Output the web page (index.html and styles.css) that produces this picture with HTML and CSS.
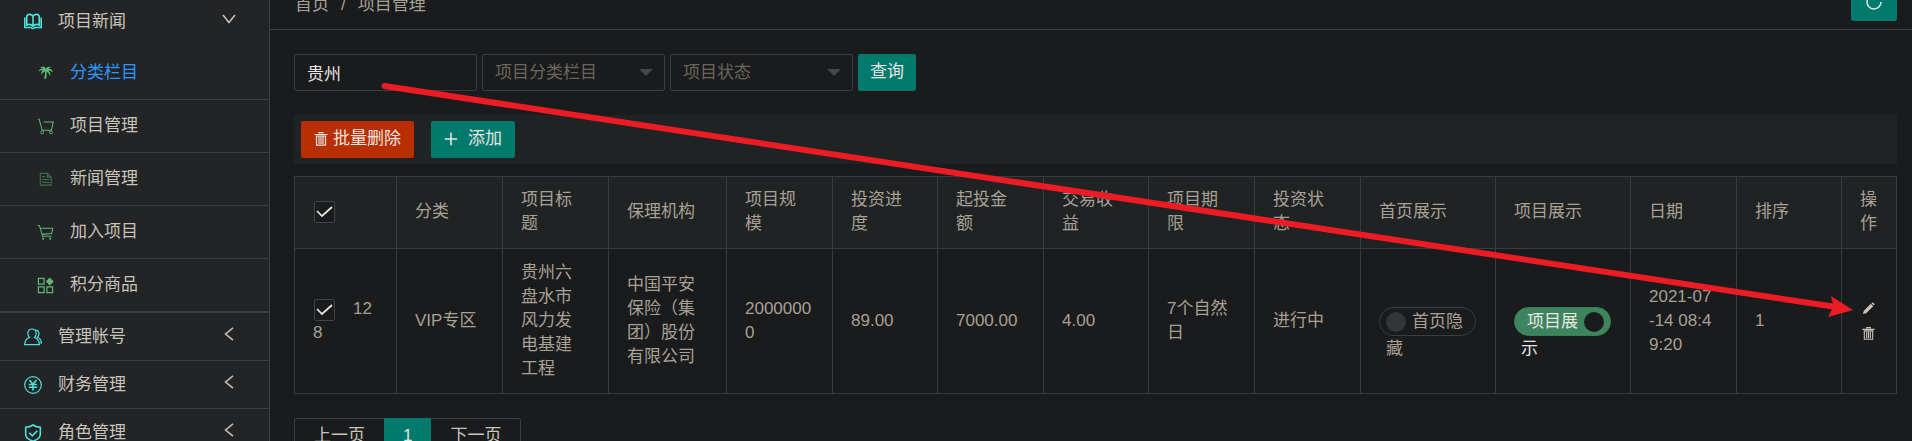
FILE: index.html
```html
<!DOCTYPE html>
<html lang="zh-CN">
<head>
<meta charset="utf-8">
<title>项目管理</title>
<link rel="stylesheet" href="styles.css">
</head>
<body>
<svg class="sprite" aria-hidden="true">
  <symbol id="i-down" viewBox="0 0 14 14"><path d="M1 3l6 7.500 6-7.500" fill="none" stroke="currentColor" stroke-width="1.500"/></symbol>
  <symbol id="i-left" viewBox="0 0 14 14"><path d="M11 .8L3.500 7l7.500 6.200" fill="none" stroke="currentColor" stroke-width="1.500"/></symbol>
  <symbol id="i-trash" viewBox="0 0 14 14"><path d="M5 1.500V.7h4v.8M.5 2.500h13M1.800 4.200h10.400M2.500 4.500v8.700h9V4.500M5 5v7M7 5v7M9 5v7" fill="none" stroke="currentColor" stroke-width="1.200"/></symbol>
  <symbol id="i-cart" viewBox="0 0 18 18"><path d="M.5 1.500h2l3.500 11.500h9.500M3.800 4.500h13L15.500 10l-10 1" fill="none" stroke="currentColor" stroke-width="1.100"/><circle cx="6.500" cy="15.500" r="1.100" fill="currentColor"/><circle cx="14" cy="15.500" r="1.100" fill="currentColor"/></symbol>
</svg>
<div class="layout">
  <nav class="sidebar" aria-label="主菜单">
    <ul class="menu">
      <li>
        <a class="menu-title menu-title-open" href="#">
          <svg class="menu-icon" viewBox="0 0 18 18"><path d="M9 3.500v9.500M9 3.500C8 .8 3.500.8 2.800 3V12c2-1 4.500-.8 6.200 1.300 1.700-2.100 4.200-2.300 6.200-1.300V3C14.500.8 10 .8 9 3.500zM.8 4.500v10H7c.5 1.300 3.500 1.300 4 0h6.200v-10" fill="none" stroke="currentColor" stroke-width="1.600"/></svg>
          <span>项目新闻</span>
          <svg class="menu-arrow"><use href="#i-down"/></svg>
        </a>
        <ul class="submenu">
          <li><a class="submenu-link submenu-link-active" href="#">
            <svg class="submenu-icon" viewBox="0 0 18 18"><path d="M9.300 5C8 2.300 5.200 2 3.500 4c1.500-.2 2.400 0 3.200.8C4.200 4.200 2 5.500 1.500 8.300c1.700-1.500 3-1.800 4.300-1.500C4.600 8 4.300 9.800 5 11.500 5.700 9.600 6.900 8.500 8.400 8c.3 2.500 0 5-1 7.500h2.200c.7-2.500.8-4.900.4-7.300 2 .8 3.300 2.500 3.800 4.800 1-2.200.2-4.400-1.600-5.700 1.800-.3 3.200.3 4.500 1.700.1-2.500-1.800-4-4.600-3.900.7-.9 1.700-1.300 3-1.300-1.800-1.600-4.500-1.100-5.800 1.200z" fill="currentColor"/></svg>
            <span>分类栏目</span></a></li>
          <li><a class="submenu-link" href="#">
            <svg class="submenu-icon" viewBox="0 0 18 18"><path d="M.8 1.300h1.500L5.500 13h9.800l1.900-8.800H7" fill="none" stroke="currentColor" stroke-width="1.100"/><circle cx="5.500" cy="15.300" r="1.500" fill="none" stroke="currentColor"/><circle cx="14.800" cy="15.300" r="1.500" fill="none" stroke="currentColor"/></svg>
            <span>项目管理</span></a></li>
          <li><a class="submenu-link" href="#">
            <svg class="submenu-icon submenu-icon-dim" viewBox="0 0 18 18"><path d="M3.500 2.500h7.500l4 4v8.500H3.500zM11 2.500v4h4M5.500 6h3M5.500 9h7.500M5.500 12h7.500" fill="none" stroke="currentColor" stroke-width="1.200"/></svg>
            <span>新闻管理</span></a></li>
          <li><a class="submenu-link" href="#">
            <svg class="submenu-icon"><use href="#i-cart"/></svg>
            <span>加入项目</span></a></li>
          <li><a class="submenu-link" href="#">
            <svg class="submenu-icon" viewBox="0 0 18 18"><path d="M1.500 1.500h6v6h-6zM1.500 10.500h6v6h-6zM10.500 10.500h6v6h-6z" fill="none" stroke="currentColor" stroke-width="1.300"/><path d="M13.500.5l4.200 4.200-4.200 4.200-4.200-4.200z" fill="currentColor"/></svg>
            <span>积分商品</span></a></li>
        </ul>
      </li>
      <li>
        <a class="menu-title" href="#">
          <svg class="menu-icon" viewBox="0 0 18 18"><path d="M5.500 9.500C3 7 3 1 8 1s5 6 2.500 8.500c3 1 4.800 3 5 7.200H.6c.2-4.200 1.900-6.200 4.900-7.200zM11.500 2c4.500.5 4 5 2 7.200 2.500 1 3.700 2.800 4 5.800h-2" fill="none" stroke="currentColor" stroke-width="1.200"/></svg>
          <span>管理帐号</span>
          <svg class="menu-arrow"><use href="#i-left"/></svg>
        </a>
      </li>
      <li>
        <a class="menu-title" href="#">
          <svg class="menu-icon" viewBox="0 0 18 18"><circle cx="9" cy="9" r="8.300" fill="none" stroke="currentColor" stroke-width="1.200"/><path d="M5.500 4L9 8.300 12.500 4M9 8v6.500M4.800 8.500h8.400M4.800 11.300h8.400" fill="none" stroke="currentColor" stroke-width="1.600"/></svg>
          <span>财务管理</span>
          <svg class="menu-arrow"><use href="#i-left"/></svg>
        </a>
      </li>
      <li>
        <a class="menu-title" href="#">
          <svg class="menu-icon" viewBox="0 0 18 18"><path d="M9 1c2 1.500 4.500 2.200 7.300 2.200v7.300c0 3-3.300 5.200-7.300 6.800-4-1.600-7.300-3.800-7.300-6.800V3.200C4.500 3.200 7 2.500 9 1zM5.300 8.800l3 3 5-5" fill="none" stroke="currentColor" stroke-width="1.600"/></svg>
          <span>角色管理</span>
          <svg class="menu-arrow"><use href="#i-left"/></svg>
        </a>
      </li>
    </ul>
  </nav>

  <main class="main">
    <header class="topbar">
      <nav class="breadcrumb" aria-label="面包屑"><a href="#">首页</a><span>/</span><a href="#">项目管理</a></nav>
      <button class="btn btn-refresh" type="button" aria-label="刷新">
        <svg class="refresh-icon" viewBox="0 0 16 16"><path d="M9 1.100A7 7 0 1 0 15 8" fill="none" stroke="currentColor" stroke-width="1.500"/></svg>
      </button>
    </header>

    <div class="content">
      <form class="search">
        <input class="field" type="text" value="贵州" aria-label="项目标题">
        <div class="select-box"><select class="field field-select" aria-label="项目分类栏目"><option>项目分类栏目</option></select></div>
        <div class="select-box"><select class="field field-select" aria-label="项目状态"><option>项目状态</option></select></div>
        <button class="btn" type="button">查询</button>
      </form>

      <div class="toolbar">
        <button class="btn btn-danger" type="button"><svg class="btn-icon"><use href="#i-trash"/></svg>批量删除</button>
        <button class="btn btn-add" type="button"><svg class="btn-icon" viewBox="0 0 14 14"><path d="M7 .8v12.400M.8 7h12.400" stroke="currentColor" stroke-width="1.600"/></svg>添加</button>
      </div>

      <table class="table">
        <colgroup>
          <col class="col-id"><col><col><col class="col-org"><col><col class="col-slim"><col><col class="col-slim"><col><col><col class="col-switch"><col class="col-switch"><col><col class="col-slim"><col class="col-action">
        </colgroup>
        <thead>
          <tr>
            <th><input class="check" type="checkbox" checked aria-label="全选"></th>
            <th>分类</th><th>项目标题</th><th>保理机构</th><th>项目规模</th><th>投资进度</th><th>起投金额</th><th>交易收益</th><th>项目期限</th><th>投资状态</th><th>首页展示</th><th>项目展示</th><th>日期</th><th>排序</th><th>操作</th>
          </tr>
        </thead>
        <tbody>
          <tr>
            <td><input class="check" type="checkbox" checked aria-label="选择 128">128</td>
            <td>VIP专区</td>
            <td>贵州六盘水市风力发电基建工程</td>
            <td>中国平安保险（集团）股份有限公司</td>
            <td>20000000</td>
            <td>89.00</td>
            <td>7000.00</td>
            <td>4.00</td>
            <td>7个自然日</td>
            <td>进行中</td>
            <td><label class="switch"><input class="switch-knob" type="checkbox">首页隐藏</label></td>
            <td><label class="switch switch-on"><input class="switch-knob" type="checkbox" checked>项目展示</label></td>
            <td>2021-07-14 08:49:20</td>
            <td>1</td>
            <td>
              <div class="actions">
                <a href="#" aria-label="编辑"><svg class="action-icon" viewBox="0 0 14 14"><path d="M1 13l1-3.500L9.500 2l2.500 2.500L4.500 12zM10.200 1.400l.9-.9c.6-.5 2.900 1.600 2.300 2.400l-.9.900z" fill="currentColor"/></svg></a>
                <a href="#" aria-label="删除"><svg class="action-icon"><use href="#i-trash"/></svg></a>
              </div>
            </td>
          </tr>
        </tbody>
      </table>

      <nav class="pager" aria-label="分页">
        <a href="#">上一页</a><a class="pager-current" href="#" aria-current="page">1</a><a href="#">下一页</a>
      </nav>
    </div>
  </main>

  <svg class="pointer" viewBox="0 0 1912 441" aria-hidden="true">
    <path d="M384.500 86L1836 307" stroke="#ed1c24" stroke-width="6" stroke-linecap="round"/>
    <path d="M1853 310l-22-14 2.500 10.500-5.500 10.500z" fill="#ed1c24"/>
  </svg>
</div>
</body>
</html>
```
FILE: styles.css
```css
* { box-sizing: border-box; }

body {
  margin: 0;
  background: #1a1b1c;
  color: #a8a095;
  font: 17px/24px "Liberation Sans", "Noto Sans CJK SC", sans-serif;
}

a { color: inherit; text-decoration: none; }
ul { margin: 0; padding: 0; list-style: none; }
button, input, select { font: inherit; margin: 0; }
svg { display: block; flex: none; }
.sprite { position: absolute; width: 0; height: 0; }

.layout {
  position: relative;
  display: flex;
  height: 100vh;
  overflow: hidden;
}

/* Sidebar */
.sidebar {
  flex: none;
  width: 270px;
  background: #222426;
  border-right: 1px solid #3a3e41;
  color: #c8c3bb;
}
.menu { margin-top: -2px; }
.menu-title {
  display: flex;
  align-items: center;
  height: 48px;
  padding: 1px 33px 0 24px;
  border-bottom: 1px solid #3a3e41;
}
.menu-title-open { border-bottom-color: transparent; }
.menu-icon { width: 18px; height: 18px; margin-right: 16px; color: #4be3dd; }
.menu-arrow { width: 14px; height: 14px; margin: 0 0 6px auto; }
.submenu { border-bottom: 2px solid #364040; }
.submenu li + li { border-top: 1px solid #3a3e41; }
.submenu-link {
  display: flex;
  align-items: center;
  height: 52px;
  padding-left: 37px;
}
.submenu li:first-child .submenu-link { height: 53px; }
.submenu-link-active { color: #2b97ff; }
.submenu-icon { width: 17px; height: 17px; margin-right: 16px; color: #5fb878; }
.submenu-icon-dim { color: #3d7049; }

/* Top bar */
.main { flex: 1; min-width: 0; }
.topbar {
  display: flex;
  justify-content: space-between;
  margin-top: -17px;
  padding: 0 15px 8px 25px;
  border-bottom: 1px solid #3a3e41;
}
.breadcrumb { height: 38px; line-height: 44px; }
.breadcrumb span { margin: 0 12px; }

/* Buttons */
.btn {
  display: flex;
  align-items: center;
  justify-content: center;
  height: 37px;
  padding: 0 12px 2px;
  border: 0;
  border-radius: 2px;
  background: #007a6c;
  color: #e8e6e3;
  white-space: nowrap;
}
.btn-refresh { width: 46px; height: 38px; padding-bottom: 0; }
.refresh-icon { width: 16px; height: 16px; }
.btn-icon { width: 14px; height: 14px; }
.btn-danger { padding: 0 13px 2px; gap: 5px; background: #b82e00; }
.btn-add { padding: 0 13px 2px; gap: 10px; }

/* Search form */
.content { padding: 24px 15px 0 24px; }
.search { display: flex; gap: 5px; margin-bottom: 24px; }
.field {
  width: 183px;
  height: 37px;
  padding: 0 12px;
  border: 1px solid #3a3e41;
  border-radius: 2px;
  background: #1a1b1c;
  color: #e8e6e3;
}
.field-select { display: block; appearance: none; color: #6a655d; }
.select-box { position: relative; }
.select-box::after {
  content: "";
  position: absolute;
  top: 15px;
  right: 12px;
  border: 7px solid transparent;
  border-top-color: #41474a;
  border-bottom: 0;
  pointer-events: none;
}

.toolbar {
  display: flex;
  gap: 17px;
  margin-bottom: 12px;
  padding: 6px 7px;
  background: #1f2323;
}

/* Table */
.table {
  width: 100%;
  table-layout: fixed;
  border-collapse: collapse;
}
.table col { width: 106px; }
.table .col-slim { width: 105px; }
.table .col-id { width: 102px; }
.table .col-org { width: 118px; }
.table .col-switch { width: 135px; }
.table .col-action { width: 55px; }
.table th, .table td {
  padding: 12px 20px 12px 18px;
  border: 1px solid #373d3f;
  font-weight: 400;
  text-align: left;
  vertical-align: middle;
  word-break: break-all;
}
.table th { padding-top: 11px; background: #1f2323; }
.table th:last-child, .table td:last-child { padding-right: 18px; }

.check {
  appearance: none;
  width: 21px;
  height: 22px;
  margin: 0 18px 0 1px;
  border: 1px solid #3e4447;
  border-radius: 2px;
  background: #1a1b1c;
  vertical-align: middle;
}
.table th .check { display: block; }
.check:checked {
  background: #1a1b1c url("data:image/svg+xml,%3Csvg xmlns='http://www.w3.org/2000/svg' viewBox='0 0 19 20'%3E%3Cpath d='M2 9l5 5L17 5' fill='none' stroke='%23e8e6e3' stroke-width='1.7'/%3E%3C/svg%3E") center / 19px 20px no-repeat;
}

.switch {
  position: relative;
  display: block;
  width: 97px;
  height: 29px;
  padding: 0 9px 0 6px;
  border: 1px solid #3a3e41;
  border-radius: 15px;
  line-height: 27px;
  text-indent: 26px;
}
.switch-knob {
  appearance: none;
  position: absolute;
  top: 4px;
  left: 6px;
  width: 20px;
  height: 20px;
  border-radius: 50%;
  background: #313638;
}
.switch-on {
  padding-right: 20px;
  border-color: #3a7f50;
  background: #3d855e;
  color: #e8e6e3;
  text-indent: 6px;
}
.switch-on .switch-knob { left: auto; right: 6px; background: #1a1b1c; }

.actions { display: flex; flex-direction: column; gap: 12px; padding-left: 2px; color: #c8c3bb; }
.action-icon { width: 13px; height: 13px; }

/* Pagination */
.pager {
  display: inline-flex;
  margin-top: 24px;
  border: 1px solid #3a3e41;
  border-radius: 2px;
  color: #c8c3bb;
}
.pager a { padding: 0 19px; line-height: 34px; white-space: nowrap; }
.pager .pager-current { margin: -1px 0; background: #007a6c; color: #e8e6e3; line-height: 36px; }

/* Arrow drawn over the page */
.pointer {
  position: absolute;
  top: 0;
  left: 0;
  width: 100%;
  pointer-events: none;
}
```
